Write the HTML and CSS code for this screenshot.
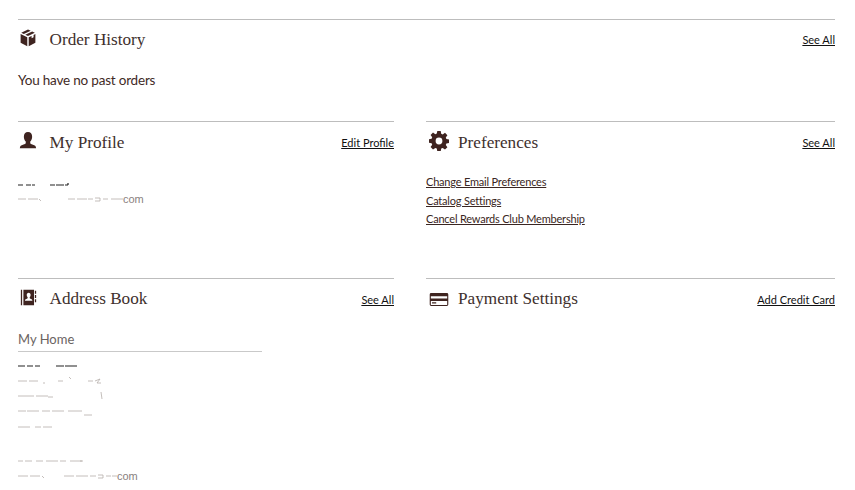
FILE: index.html
```html
<!DOCTYPE html>
<html lang="en">
<head>
<meta charset="utf-8">
<title>My Account</title>
<link rel="stylesheet" href="styles.css">
</head>
<body>
<main class="page">
  <section class="panel panel-orders">
    <header class="head">
      <svg class="icon" viewBox="0 0 20 20"><path d="M10 .5l3 1.400-7.600 3.700-2.900-1.500zM14.600 2.700l3 1.500-7.600 3.700-3-1.500zM1.800 5.600l7.400 3.700v9.900L1.800 15.400zM18.200 5.600v9.800l-7.400 3.800V9.300l3.200-1.600v2.600l2.200-1.100V6.600z"/></svg>
      <h2>Order History</h2>
      <a class="action" href="#">See All</a>
    </header>
    <p class="note">You have no past orders</p>
  </section>

  <div class="columns">
    <section class="panel panel-profile">
      <header class="head head-tall">
        <svg class="icon" viewBox="0 0 20 20"><path d="M10 0c3 0 4.600 2.200 4.600 5.300 0 2.300-.9 4.300-2.100 5.300v1.600c0 .8 1 1.200 3 1.900 2 .6 3.400 1.200 3.500 3.900H.9c.1-2.700 1.500-3.300 3.500-3.900 2-.7 3.100-1.100 3.100-1.900v-1.600C6.300 9.600 5.400 7.600 5.400 5.300 5.400 2.200 7 0 10 0z"/></svg>
        <h2>My Profile</h2>
        <a class="action" href="#">Edit Profile</a>
      </header>
      <svg class="scrap scrap-top" viewBox="0 0 60 5"><path class="ink" d="M0 3h5M8 3h5M14 3h3M32 3h5M38 3h8M47 3h3M50 1v2"/></svg>
      <div class="scrap-line">
        <svg class="scrap scrap-mail" viewBox="0 0 105 6"><path class="ash" d="M0 3h8M10 3h10M21 3l2 2M50 3h7M59 3h10M70 3h5M77 2h5v3h-5M85 3h5M93 3h12"/></svg>
        <span class="tld">com</span>
      </div>
    </section>

    <section class="panel panel-prefs">
      <header class="head head-tall">
        <svg class="icon" viewBox="0 0 20 20"><path fill-rule="evenodd" d="M8.300 0h3.400l.5 2.800 1.500.6 2.300-1.600 2.400 2.400-1.600 2.300.6 1.500 2.800.5v3.400l-2.800.5-.6 1.500 1.600 2.300-2.400 2.400-2.300-1.600-1.500.6-.5 2.800H8.300l-.5-2.800-1.500-.6L4 18.400 1.600 16l1.600-2.300-.6-1.500L-.2 11.700V8.300l2.800-.5.6-1.500L1.600 4 4 1.600l2.300 1.600 1.500-.6zM10 6.600a3.400 3.400 0 100 6.800 3.400 3.400 0 000-6.800z"/></svg>
        <h2>Preferences</h2>
        <a class="action" href="#">See All</a>
      </header>
      <ul class="links">
        <li><a href="#">Change Email Preferences</a></li>
        <li><a href="#">Catalog Settings</a></li>
        <li><a href="#">Cancel Rewards Club Membership</a></li>
      </ul>
    </section>

    <section class="panel">
      <header class="head">
        <svg class="icon icon-book" viewBox="0 0 20 20"><path fill-rule="evenodd" d="M1 1h1.500v18H1zM4 1h12.500v18H4zM10.200 4.500c-1.500 0-2.300 1.100-2.300 2.600 0 1.100.4 2 1.100 2.600v1c0 .5-.6.8-1.600 1.100-1 .3-1.500.7-1.500 1.900h8.600c0-1.200-.6-1.600-1.600-1.900-1-.3-1.500-.6-1.500-1.100v-1c.7-.6 1.100-1.500 1.100-2.600 0-1.500-.8-2.600-2.300-2.600zM17.500 2H19v3.500h-1.500zM17.500 7H19v3.500h-1.500zM17.500 12H19v3.500h-1.500z"/></svg>
        <h2>Address Book</h2>
        <a class="action action-low" href="#">See All</a>
      </header>
      <h3 class="address-title">My Home</h3>
      <svg class="scrap scrap-address" viewBox="0 0 100 72"><path class="ink" d="M0 1h7M9 1h6M17 1h5M38 1h8M47 1h12"/><path class="ash" d="M0 16h9M11 16h9M26 17v2M40 16h5M51 12l2 2M70 16h5M77 16l5-2-3 4h4M0 31h16M18 31h12M30 32h5M83 27l1 7M0 46h8M9 46h12M24 46h8M34 46h12M50 46h14M66 50h8M0 62h12M17 62h6M25 62h9"/></svg>
      <svg class="scrap scrap-phone" viewBox="0 0 70 4"><path class="ash" d="M0 2h5M7 2h7M18 2h7M28 2h12M42 2h6M52 2h12M62 2h3"/></svg>
      <div class="scrap-line">
        <svg class="scrap scrap-mail-short" viewBox="0 0 99 6"><path class="ash" d="M0 3h10M12 3h10M24 3l2 2M46 3h10M58 3h12M72 3h6M80 2h5v3h-5M88 3h5M94 3h5"/></svg>
        <span class="tld">com</span>
      </div>
    </section>

    <section class="panel">
      <header class="head">
        <svg class="icon icon-card" viewBox="0 0 20 14"><path fill-rule="evenodd" d="M1.500 0h17A1.500 1.500 0 0120 1.500v11a1.500 1.500 0 01-1.500 1.500h-17A1.500 1.500 0 010 12.500v-11A1.500 1.500 0 011.500 0zM1.200 3.600v2.300h17.600V3.600zM1.200 8.500v4.300h17.600V8.500zM2.500 10h4.500v1.200H2.500z"/></svg>
        <h2>Payment Settings</h2>
        <a class="action action-low" href="#">Add Credit Card</a>
      </header>
    </section>
  </div>
</main>
</body>
</html>
```
FILE: styles.css
```css
* { box-sizing: border-box; }

html, body { margin: 0; background: #fff; }

body {
  height: 490px;
  overflow: hidden;
  color: #3f2a26;
  font-family: "Lato", "Liberation Sans", sans-serif;
}

.page { padding: 19px 20px 0 18px; }

.panel { border-top: 1px solid #bdbdbd; }

.panel-orders { height: 102px; }

.columns {
  display: grid;
  grid-template-columns: 376px 409px;
  grid-template-rows: 157px auto;
  column-gap: 32px;
}

.head {
  display: flex;
  align-items: center;
  height: 40px;
}

.head-tall { height: 42px; }

.icon {
  flex: none;
  width: 18px;
  height: 18px;
  margin: 0 12.500px 4px 1px;
  fill: #3f2420;
}

.icon-book { width: 17px; height: 17px; margin: 0 12.500px 4px 2px; }

.icon-card { width: 20px; height: 13px; margin: 0 9px 0 3px; }

.panel-prefs .icon { width: 20px; height: 20px; margin: 0 9px 4px 3px; }

.head h2 {
  flex: 1;
  margin: 0;
  font: 400 17.200px/24px "Liberation Serif", serif;
  color: #40302d;
}

.action {
  font-size: 11px;
  line-height: 14px;
  color: #111;
  text-decoration: underline;
}

.action-low { margin-top: 2px; }

.note {
  margin: 11px 0 0;
  font-size: 13.500px;
  letter-spacing: -.2px;
  line-height: 18px;
  color: #3f2a26;
}

.links {
  list-style: none;
  margin: 9px 0 0;
  padding: 0;
  font-size: 11px;
  letter-spacing: -.2px;
  line-height: 18.500px;
}

.links a { color: #3a2622; text-decoration: underline; }

.address-title {
  margin: 10px 0 0;
  width: 244px;
  height: 23px;
  border-bottom: 1px solid #c9c9c9;
  font-size: 13px;
  font-weight: 400;
  line-height: 20px;
  color: #6b6462;
}

.scrap { display: block; fill: none; }

.ink { stroke: #222; stroke-width: 1.200; }

.ash { stroke: #b5adaa; stroke-width: .8; }

.scrap-top { width: 60px; height: 5px; margin-top: 18px; }

.scrap-line { display: flex; align-items: center; height: 14px; }

.panel-profile .scrap-line { margin-top: 5px; }

.scrap-mail { width: 105px; height: 6px; }

.scrap-mail-short { width: 99px; height: 6px; }

.tld {
  font: 11px/14px "Liberation Sans", sans-serif;
  color: #8a817e;
}

.scrap-address { width: 100px; height: 72px; margin-top: 13px; }

.scrap-phone { width: 70px; height: 4px; margin-top: 22px; }

.scrap-phone + .scrap-line { margin-top: 6px; }
```
